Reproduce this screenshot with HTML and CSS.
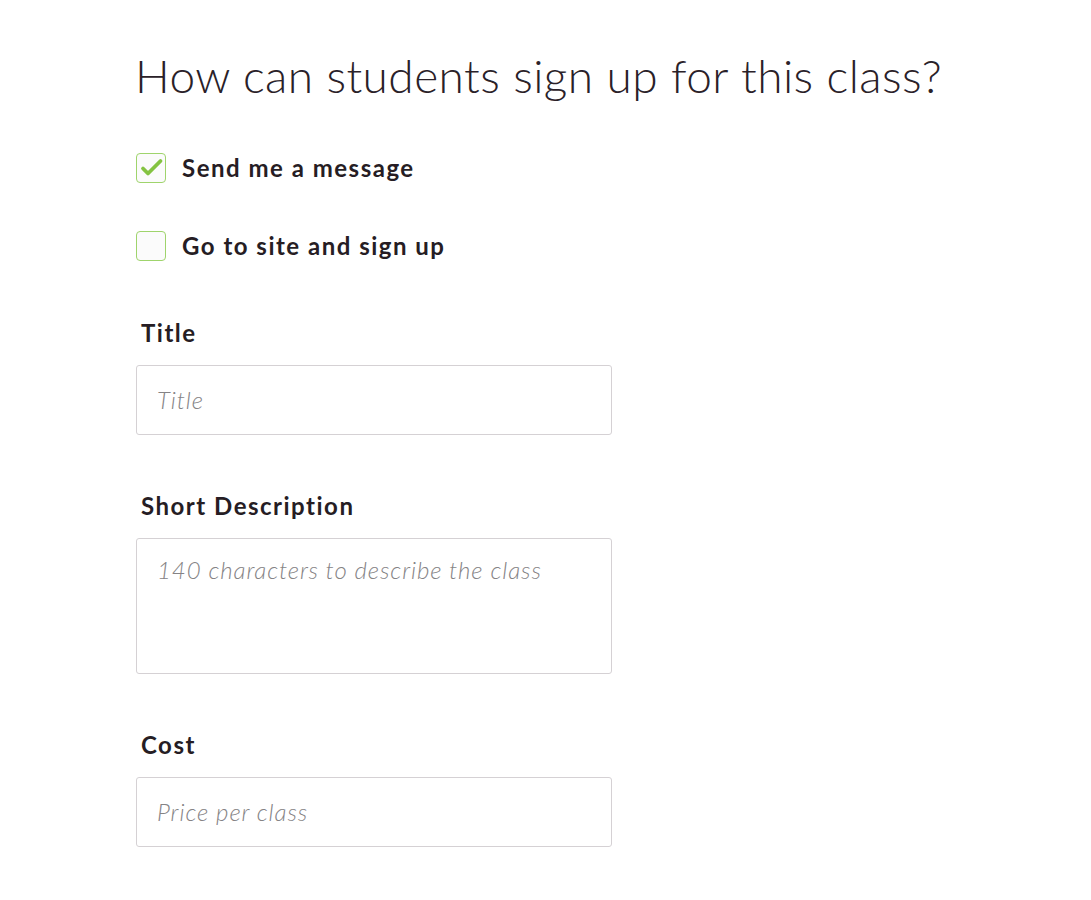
FILE: index.html
```html
<!DOCTYPE html>
<html lang="en">
<head>
<meta charset="utf-8">
<title>Sign up options</title>
<link rel="stylesheet" href="styles.css">
</head>
<body>
<main class="page">
  <h1 class="heading">How can students sign up for this class?</h1>

  <div class="options">
    <label class="option">
      <span class="box box-checked">
        <svg width="30" height="30" viewBox="0 0 30 30"><path d="M7 15.5 L12 20.5 L24.5 8" fill="none" stroke="#84c341" stroke-width="3.8" stroke-linecap="round" stroke-linejoin="round"/></svg>
      </span>
      <span class="option-text">Send me a message</span>
    </label>
    <label class="option">
      <span class="box"></span>
      <span class="option-text">Go to site and sign up</span>
    </label>
  </div>

  <div class="field">
    <div class="label">Title</div>
    <div class="input"><span class="placeholder">Title</span></div>
  </div>

  <div class="field">
    <div class="label">Short Description</div>
    <div class="input textarea"><span class="placeholder">140 characters to describe the class</span></div>
  </div>

  <div class="field">
    <div class="label">Cost</div>
    <div class="input"><span class="placeholder">Price per class</span></div>
  </div>
</main>
</body>
</html>
```

FILE: styles.css
```css
* { box-sizing: border-box; }

html, body {
  margin: 0;
  padding: 0;
  background: #ffffff;
}

body {
  font-family: Lato, "Open Sans", sans-serif;
  color: #2a2128;
}

.page {
  padding: 48px 0 0 135px;
}

.heading {
  margin: 0;
  font-size: 46px;
  line-height: 56px;
  font-weight: 300;
  color: #2a2128;
  letter-spacing: 0.45px;
}

.options {
  margin-top: 49px;
  display: flex;
  flex-direction: column;
  gap: 48px;
  padding-left: 1px;
}

.option {
  display: flex;
  align-items: center;
  gap: 16px;
  height: 30px;
}

.box {
  width: 30px;
  height: 30px;
  border: 1.5px solid #9fd46c;
  border-radius: 4px;
  background: #fbfbfb;
  display: flex;
  align-items: center;
  justify-content: center;
}

.box svg {
  display: block;
  flex: none;
}

.option-text {
  font-size: 24px;
  line-height: 30px;
  font-weight: 700;
  letter-spacing: 1.5px;
  color: #261d24;
}

.field {
  padding-left: 1px;
  margin-top: 57px;
}

.field + .field {
  margin-top: 56px;
}

.label {
  font-size: 24px;
  line-height: 30px;
  font-weight: 700;
  letter-spacing: 1.5px;
  padding-left: 5px;
  margin-bottom: 17px;
  color: #261d24;
}

.input {
  width: 476px;
  height: 70px;
  border: 1px solid #d5d1d4;
  border-radius: 3px;
  display: flex;
  align-items: center;
  padding-left: 20px;
  background: #fff;
}

.textarea {
  height: 136px;
  align-items: flex-start;
  padding-top: 16px;
}

.placeholder {
  font-size: 24px;
  line-height: 30px;
  font-style: italic;
  font-weight: 300;
  letter-spacing: 0.9px;
  color: #858385;
}
```
